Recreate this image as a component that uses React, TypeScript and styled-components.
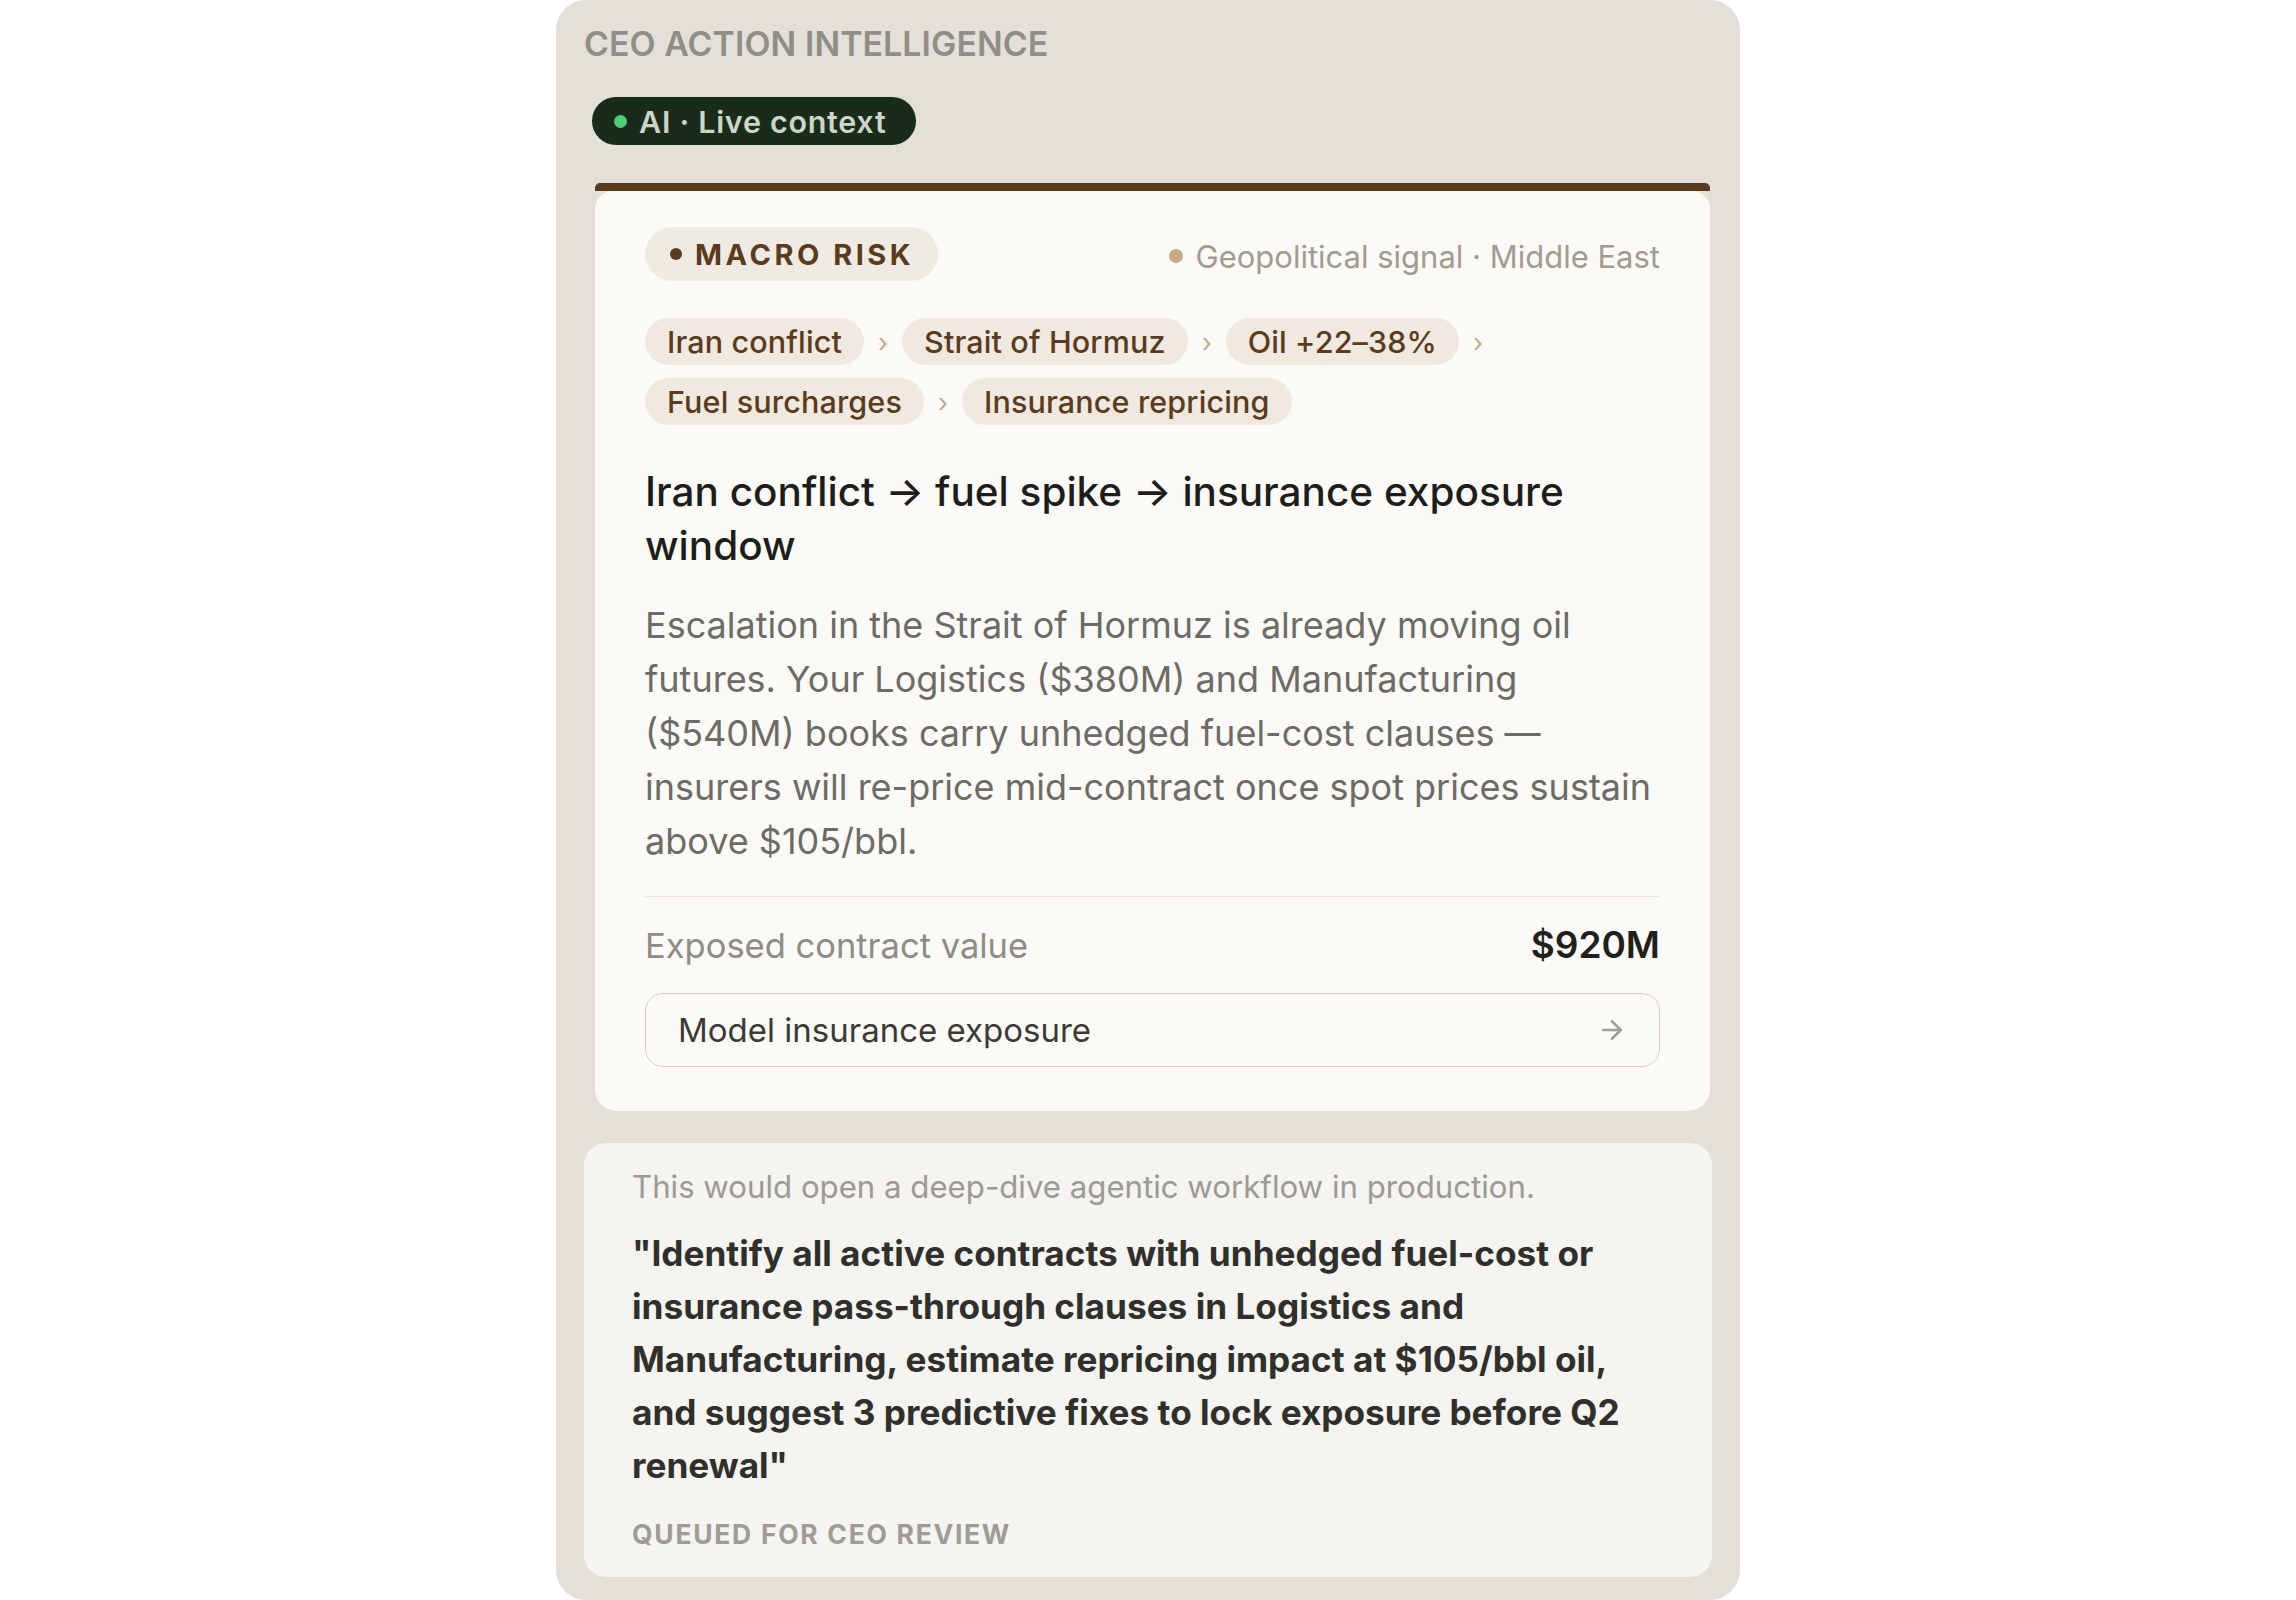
import React from "react";
import styled, { createGlobalStyle } from "styled-components";
import { ArrowRight } from "lucide-react";

const Global = createGlobalStyle`
  html, body { margin: 0; padding: 0; background: #ffffff; }
  body { font-family: Inter, "Noto Sans", sans-serif; -webkit-font-smoothing: antialiased; }
  * { box-sizing: border-box; }
`;

const Page = styled.div`
  display: flex;
  justify-content: center;
  width: 100%;
`;

const Panel = styled.section`
  width: 1184px;
  height: 1600px;
  background: #e4e0d9;
  border-radius: 30px;
  padding: 24px 28px 23px;
  display: flex;
  flex-direction: column;
`;

const Title = styled.h2`
  margin: 0;
  font-size: 33.8px;
  line-height: 40px;
  font-weight: 600;
  color: #8f8e87;
  letter-spacing: 0.1px;
`;

const LiveBadge = styled.div`
  align-self: flex-start;
  margin: 33px 0 0 8px;
  height: 49px;
  display: inline-flex;
  align-items: center;
  gap: 12px;
  padding: 0 30px 0 22px;
  border-radius: 999px;
  background: #182c19;
  color: #cdd4c8;
  font-size: 30.5px;
  font-weight: 600;
  letter-spacing: 0.7px;
`;

const Dot = styled.span<{ $color: string; $size: number }>`
  width: ${(p) => p.$size}px;
  height: ${(p) => p.$size}px;
  border-radius: 50%;
  background: ${(p) => p.$color};
  flex: none;
`;

const CardWrap = styled.div`
  margin: 38px 2px 0 11px;
  display: flex;
  flex-direction: column;
`;

const TopBar = styled.div`
  height: 8px;
  background: #5a3b20;
  border-radius: 5px 5px 0 0;
`;

const CardBody = styled.div`
  background: #fcfaf6;
  border-radius: 18px 18px 22px 22px;
  padding: 36px 50px 44px;
  display: flex;
  flex-direction: column;
`;

const HeaderRow = styled.div`
  display: flex;
  align-items: center;
  justify-content: space-between;
  height: 54px;
`;

const RiskPill = styled.div`
  height: 54px;
  display: inline-flex;
  align-items: center;
  gap: 13px;
  padding: 0 24px 0 25px;
  border-radius: 999px;
  background: #f0ebe2;
  color: #5a3b20;
  font-size: 29px;
  font-weight: 700;
  letter-spacing: 3.5px;
`;

const Signal = styled.div`
  display: flex;
  align-items: center;
  gap: 13px;
  font-size: 31px;
  color: #a29b8f;
  padding-top: 4px;
`;

const Chain = styled.div`
  margin-top: 37px;
  display: flex;
  flex-wrap: wrap;
  align-items: center;
  row-gap: 13px;
  column-gap: 14px;
`;

const ChainPill = styled.span`
  height: 47px;
  display: inline-flex;
  align-items: center;
  padding: 0 22px;
  border-radius: 999px;
  background: #efe9df;
  color: #5a3b20;
  font-size: 30.5px;
  font-weight: 500;
  letter-spacing: 0.15px;
`;

const Chevron = styled.span`
  color: #bba991;
  font-size: 26px;
  line-height: 1;
  padding-top: 2px;
`;

const Headline = styled.h3`
  margin: 40px 0 0;
  font-size: 40.5px;
  line-height: 54px;
  font-weight: 500;
  color: #1d1d1b;
`;

const BodyText = styled.p`
  margin: 25px 0 0;
  font-size: 36px;
  line-height: 54px;
  color: #6c6b66;
  font-weight: 400;
`;

const StatRow = styled.div`
  margin-top: 28px;
  border-top: 1.5px solid #ebe6de;
  padding-top: 26px;
  display: flex;
  align-items: baseline;
  justify-content: space-between;
`;

const StatLabel = styled.span`
  font-size: 34.5px;
  line-height: 44px;
  color: #8d8c86;
`;

const StatValue = styled.span`
  font-size: 37px;
  line-height: 44px;
  font-weight: 600;
  color: #1f1f1c;
`;

const ActionButton = styled.button`
  margin-top: 25px;
  height: 74px;
  display: flex;
  align-items: center;
  justify-content: space-between;
  padding: 0 32px 0 32px;
  border: 1.5px solid #d4cfc6;
  border-radius: 18px;
  background: #fcfaf6;
  font-family: Inter, "Noto Sans", sans-serif;
  font-size: 33px;
  color: #3a3a36;
  cursor: pointer;
  text-align: left;
`;

const NoteCard = styled.div`
  margin-top: 32px;
  background: #f6f4f0;
  border-radius: 22px;
  padding: 23px 48px 26px;
  display: flex;
  flex-direction: column;
`;

const NoteIntro = styled.p`
  margin: 0;
  font-size: 31.2px;
  line-height: 42px;
  color: #9b9a94;
`;

const Quote = styled.p`
  margin: 19px 0 0;
  font-size: 35.2px;
  line-height: 53px;
  font-weight: 700;
  color: #2f2f2c;
`;

const Queued = styled.div`
  margin-top: 25px;
  font-size: 26.5px;
  line-height: 34px;
  font-weight: 700;
  letter-spacing: 1.7px;
  color: #9d9c96;
`;

const chain = [
  "Iran conflict",
  "Strait of Hormuz",
  "Oil +22–38%",
  "Fuel surcharges",
  "Insurance repricing",
];

export default function App() {
  return (
    <Page>
      <Global />
      <Panel>
        <Title>CEO ACTION INTELLIGENCE</Title>
        <LiveBadge>
          <Dot $color="#4fcf78" $size={13} />
          AI · Live context
        </LiveBadge>
        <CardWrap>
          <TopBar />
          <CardBody>
            <HeaderRow>
              <RiskPill>
                <Dot $color="#5a3b20" $size={12} />
                MACRO RISK
              </RiskPill>
              <Signal>
                <Dot $color="#c6ab86" $size={14} />
                Geopolitical signal · Middle East
              </Signal>
            </HeaderRow>
            <Chain>
              {chain.map((c, i) => (
                <React.Fragment key={c}>
                  <ChainPill>{c}</ChainPill>
                  {i < chain.length - 1 && <Chevron>›</Chevron>}
                </React.Fragment>
              ))}
            </Chain>
            <Headline>Iran conflict → fuel spike → insurance exposure window</Headline>
            <BodyText>
              Escalation in the Strait of Hormuz is already moving oil futures. Your Logistics
              ($380M) and Manufacturing ($540M) books carry unhedged fuel-cost clauses —
              insurers will re-price mid-contract once spot prices sustain above $105/bbl.
            </BodyText>
            <StatRow>
              <StatLabel>Exposed contract value</StatLabel>
              <StatValue>$920M</StatValue>
            </StatRow>
            <ActionButton>
              Model insurance exposure
              <ArrowRight size={30} strokeWidth={2} color="#9e9d97" />
            </ActionButton>
          </CardBody>
        </CardWrap>
        <NoteCard>
          <NoteIntro>This would open a deep-dive agentic workflow in production.</NoteIntro>
          <Quote>
            "Identify all active contracts with unhedged fuel-cost or insurance pass-through
            clauses in Logistics and Manufacturing, estimate repricing impact at $105/bbl oil,
            and suggest 3 predictive fixes to lock exposure before Q2 renewal"
          </Quote>
          <Queued>QUEUED FOR CEO REVIEW</Queued>
        </NoteCard>
      </Panel>
    </Page>
  );
}
